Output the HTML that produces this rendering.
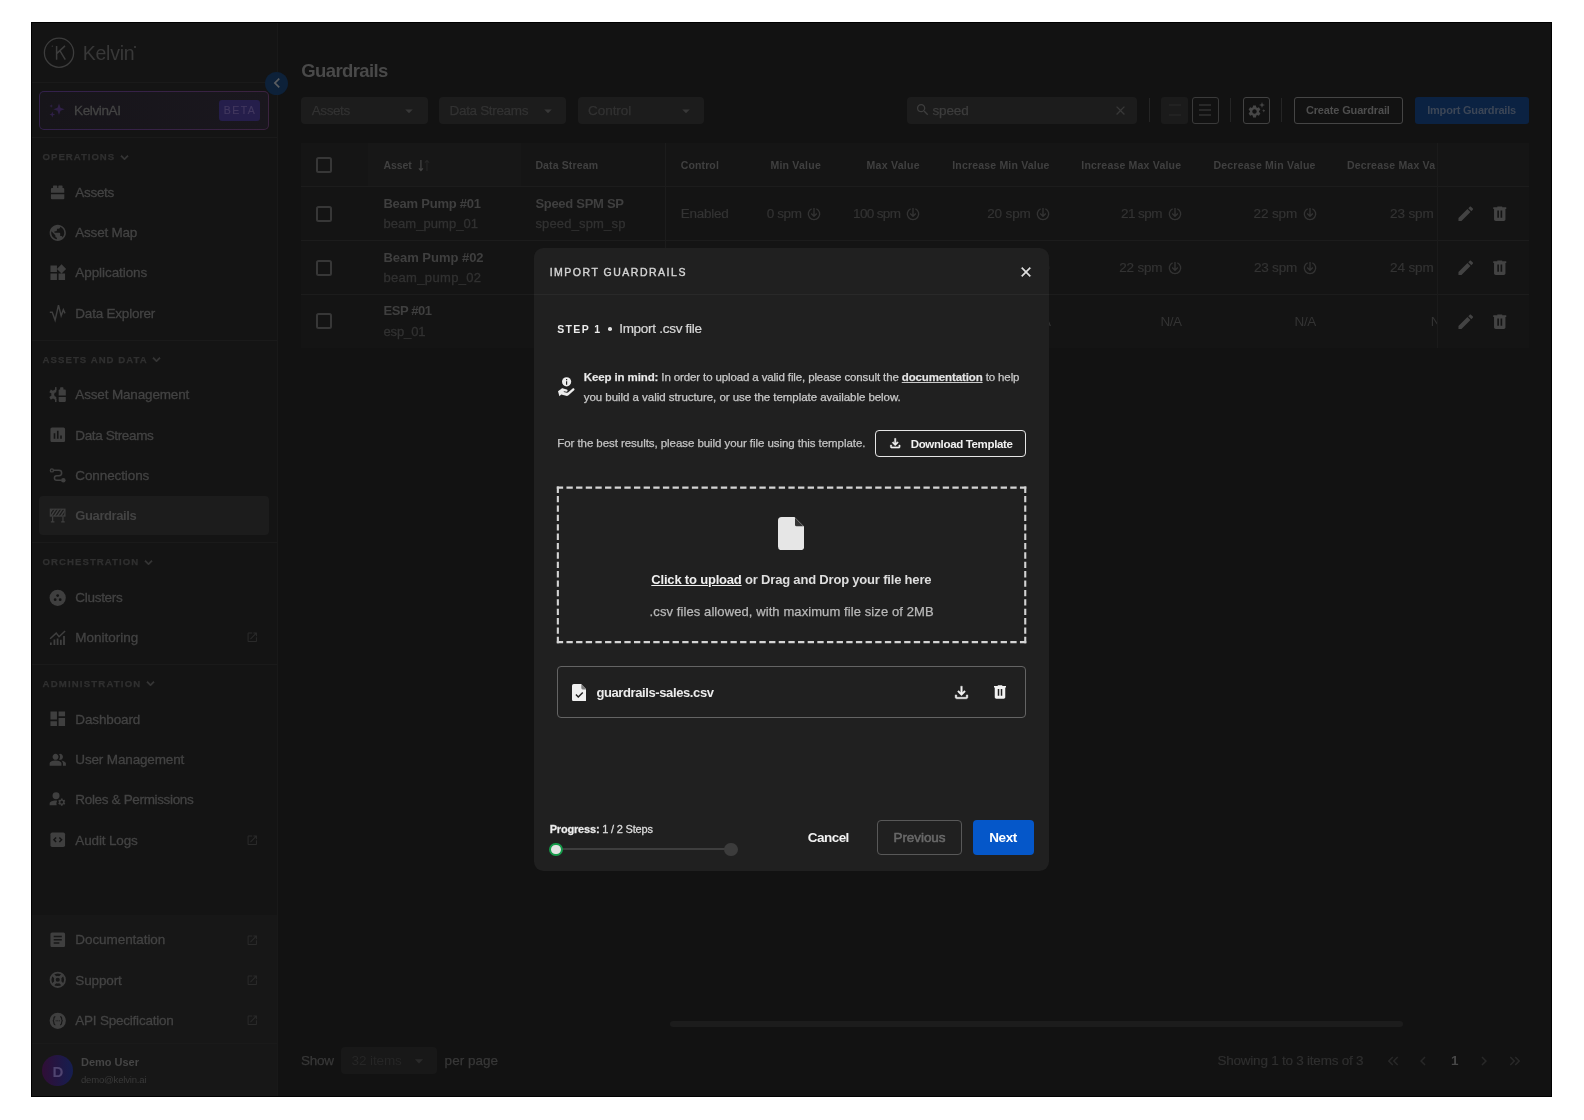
<!DOCTYPE html>
<html lang="en"><head><meta charset="utf-8"><title>Guardrails</title><style>
html,body{margin:0;padding:0;background:#fff;}
body{width:1584px;height:1120px;position:relative;overflow:hidden;font-family:"Liberation Sans",sans-serif;}
div,svg,span.t{position:absolute;}
span.t{white-space:nowrap;}
#root{left:0;top:0;width:1584px;height:1120px;will-change:transform;}
b{font-weight:700;}
</style></head><body>
<div id="root">
<div style="left:31px;top:22px;width:1521px;height:1075px;background:#121212;border:1px solid #000;box-sizing:border-box;"></div>
<div style="left:32px;top:23px;width:246px;height:1073px;background:#141414;border-right:1px solid #191919;box-sizing:border-box;"></div>
<div style="left:32px;top:915px;width:245px;height:181px;background:#171717;"></div>
<svg style="left:43px;top:37px" width="32" height="32" viewBox="0 0 32 32" fill="none" stroke="#3d3d3d"><circle cx="16" cy="15.7" r="14.6" stroke-width="1.3"/><path d="M13.600 8.900v13.800M22 8.900l-8.400 7.700M17 13.800l5.300 8.900" stroke-width="1.500"/><circle cx="9.300" cy="9.200" r=".650" fill="#3d3d3d" stroke="none"/></svg>
<span class="t" style="top:39.8px;font-size:19.5px;line-height:27px;color:#383838;letter-spacing:-0.224px;left:82.7px;">Kelvin</span>
<div style="left:134.4px;top:46.4px;width:1.7px;height:1.7px;background:#3d3d3d;border-radius:1px;"></div>
<div style="left:32px;top:82px;width:245px;height:1px;background:#1a1a1a;"></div>
<div style="left:32px;top:137px;width:245px;height:1px;background:#1a1a1a;"></div>
<div style="left:32px;top:340px;width:245px;height:1px;background:#1a1a1a;"></div>
<div style="left:32px;top:542px;width:245px;height:1px;background:#1a1a1a;"></div>
<div style="left:32px;top:664px;width:245px;height:1px;background:#1a1a1a;"></div>
<div style="left:32px;top:1043px;width:245px;height:1px;background:#1a1a1a;"></div>
<div style="left:39px;top:91px;width:230px;height:38.5px;border:1px solid transparent;border-radius:5px;box-sizing:border-box;background:linear-gradient(90deg,#17151a,#1a171e) padding-box,linear-gradient(90deg,#33214c,#3b2340) border-box;"></div>
<svg style="left:47px;top:100px" width="20" height="20" viewBox="0 0 20 20" fill="#2f2047"><path d="M12 3.5l1.5 4.2 4.2 1.5-4.2 1.5L12 14.9l-1.5-4.2-4.2-1.5 4.2-1.5zM5.3 11.6l.8 2.1 2.1.8-2.1.8-.8 2.1-.8-2.1-2.1-.8 2.1-.8zM4.2 4.2l.5 1.3 1.3.5-1.3.5-.5 1.3-.5-1.3-1.3-.5 1.3-.5z"/></svg>
<span class="t" style="top:101px;font-size:13.5px;line-height:19px;color:#444444;-webkit-text-stroke:0.3px #444444;letter-spacing:-0.362px;left:74px;">KelvinAI</span>
<div style="left:219px;top:100px;width:40.5px;height:20.5px;background:#251e4b;border-radius:3px;"></div>
<span class="t" style="top:103.2px;font-size:10.5px;line-height:15px;color:#42385f;-webkit-text-stroke:0.2px #42385f;letter-spacing:1.452px;left:223.8px;">BETA</span>
<div style="left:265.1px;top:71.7px;width:23.4px;height:23.4px;background:#0d2139;border-radius:50%;"></div>
<svg style="left:267px;top:73.3px" width="20" height="20" viewBox="0 0 24 24" fill="#5a5d60"><path d="M15.41 7.41L14 6l-6 6 6 6 1.41-1.41L10.83 12z"/></svg>
<span class="t" style="top:150.2px;font-size:9.6px;line-height:13px;color:#303030;font-weight:700;-webkit-text-stroke:0.25px #303030;letter-spacing:0.985px;left:42.6px;">OPERATIONS</span>
<svg style="left:116.6px;top:150px" width="15" height="15" viewBox="0 0 24 24" fill="#383838" stroke="#383838" stroke-width=".9"><path d="M16.59 8.59L12 13.17 7.41 8.59 6 10l6 6 6-6z"/></svg>
<span class="t" style="top:352.5px;font-size:9.6px;line-height:13px;color:#303030;font-weight:700;-webkit-text-stroke:0.25px #303030;letter-spacing:1.052px;left:42.6px;">ASSETS AND DATA</span>
<svg style="left:149.1px;top:352.3px" width="15" height="15" viewBox="0 0 24 24" fill="#383838" stroke="#383838" stroke-width=".9"><path d="M16.59 8.59L12 13.17 7.41 8.59 6 10l6 6 6-6z"/></svg>
<span class="t" style="top:554.9px;font-size:9.6px;line-height:13px;color:#303030;font-weight:700;-webkit-text-stroke:0.25px #303030;letter-spacing:1.053px;left:42.6px;">ORCHESTRATION</span>
<svg style="left:140.6px;top:554.7px" width="15" height="15" viewBox="0 0 24 24" fill="#383838" stroke="#383838" stroke-width=".9"><path d="M16.59 8.59L12 13.17 7.41 8.59 6 10l6 6 6-6z"/></svg>
<span class="t" style="top:676.6px;font-size:9.6px;line-height:13px;color:#303030;font-weight:700;-webkit-text-stroke:0.25px #303030;letter-spacing:1.167px;left:42.6px;">ADMINISTRATION</span>
<svg style="left:142.6px;top:676.4px" width="15" height="15" viewBox="0 0 24 24" fill="#383838" stroke="#383838" stroke-width=".9"><path d="M16.59 8.59L12 13.17 7.41 8.59 6 10l6 6 6-6z"/></svg>
<span class="t" style="top:182.8px;font-size:13.5px;line-height:19px;color:#434343;-webkit-text-stroke:0.3px #434343;letter-spacing:-0.304px;left:75.3px;">Assets</span>
<svg style="left:48.250px;top:182.55px" width="19.500" height="19.500" viewBox="0 0 24 24" fill="#3f3f3f"><path d="M3.600 13.800h16.500v5a1.200 1.200 0 0 1-1.200 1.200H4.800a1.200 1.200 0 0 1-1.200-1.200zM3.600 12V7.300a1.200 1.200 0 0 1 1.200-1.200h1.400V3.800a.8.800 0 0 1 .8-.8h3.600a.8.800 0 0 1 .8.800v2.300h1.300V3.800a.8.800 0 0 1 .8-.8h3.600a.8.800 0 0 1 .8.800v2.300h.9a1.200 1.200 0 0 1 1.200 1.200V12z"/></svg>
<span class="t" style="top:223px;font-size:13.5px;line-height:19px;color:#434343;-webkit-text-stroke:0.3px #434343;letter-spacing:-0.224px;left:75.3px;">Asset Map</span>
<svg style="left:48.25px;top:222.75px" width="19.5" height="19.5" viewBox="0 0 24 24" fill="#3f3f3f"><path d="M12 2C6.48 2 2 6.48 2 12s4.48 10 10 10 10-4.48 10-10S17.52 2 12 2zm-1 17.93c-3.95-.49-7-3.85-7-7.93 0-.62.08-1.21.21-1.79L9 15v1c0 1.1.9 2 2 2v1.93zm6.9-2.54c-.26-.81-1-1.39-1.9-1.39h-1v-3c0-.55-.45-1-1-1H8v-2h2c.55 0 1-.45 1-1V7h2c1.1 0 2-.9 2-2v-.41c2.93 1.19 5 4.06 5 7.41 0 2.08-.8 3.97-2.1 5.39z"/></svg>
<span class="t" style="top:263.2px;font-size:13.5px;line-height:19px;color:#434343;-webkit-text-stroke:0.3px #434343;letter-spacing:-0.073px;left:75.3px;">Applications</span>
<svg style="left:48.25px;top:262.95px" width="19.5" height="19.5" viewBox="0 0 24 24" fill="#3f3f3f"><path d="M13 13v8h8v-8h-8zM3 21h8v-8H3v8zM3 3v8h8V3H3zm13.66-1.31L11 7.34 16.66 13l5.66-5.66-5.66-5.65z"/></svg>
<span class="t" style="top:303.5px;font-size:13.5px;line-height:19px;color:#434343;-webkit-text-stroke:0.3px #434343;letter-spacing:-0.211px;left:75.3px;">Data Explorer</span>
<svg style="left:48.250px;top:303.25px" width="19.500" height="19.500" viewBox="0 0 24 24" fill="#3f3f3f"><path d="M2.200 11.400H5.200L8.750 21 12.900 2.600 16.200 15.800 18.900 8.300 21 12.700" fill="none" stroke="#3f3f3f" stroke-width="1.800" stroke-linejoin="miter"/></svg>
<span class="t" style="top:385.1px;font-size:13.5px;line-height:19px;color:#434343;-webkit-text-stroke:0.3px #434343;letter-spacing:-0.155px;left:75.3px;">Asset Management</span>
<svg style="left:48.250px;top:384.85px" width="19.500" height="19.500" viewBox="0 0 24 24" fill="#3f3f3f"><defs><clipPath id="hg"><rect x="0" y="0" width="10.500" height="24"/></clipPath></defs><g clip-path="url(#hg)"><path d="M10.500 5.300A6.500 6.500 0 0 0 10.500 18.300V14.800A3 3 0 0 1 10.500 8.800z"/><rect x="-1.900" y="-9.200" width="3.800" height="4" transform="translate(10.500 11.800) rotate(0)"/><rect x="-1.900" y="-9.200" width="3.800" height="4" transform="translate(10.500 11.800) rotate(-60)"/><rect x="-1.900" y="-9.200" width="3.800" height="4" transform="translate(10.500 11.800) rotate(-120)"/><rect x="-1.900" y="-9.200" width="3.800" height="4" transform="translate(10.500 11.800) rotate(180)"/></g><path d="M13.100 12.900V6.500a1 1 0 0 1 1-1h.8V3.600a.8.800 0 0 1 .8-.8h2.500a.8.800 0 0 1 .8.800V5.500h1.900a1 1 0 0 1 1 1v6.400zM13.100 14.700h8.800v5.100a1 1 0 0 1-1 1h-6.800a1 1 0 0 1-1-1z"/></svg>
<span class="t" style="top:425.5px;font-size:13.5px;line-height:19px;color:#434343;-webkit-text-stroke:0.3px #434343;letter-spacing:-0.368px;left:75.3px;">Data Streams</span>
<svg style="left:48.25px;top:425.25px" width="19.5" height="19.5" viewBox="0 0 24 24" fill="#3f3f3f"><path d="M19 3H5c-1.1 0-2 .9-2 2v14c0 1.1.9 2 2 2h14c1.1 0 2-.9 2-2V5c0-1.1-.9-2-2-2zM9 17H7v-7h2v7zm4 0h-2V7h2v10zm4 0h-2v-4h2v4z"/></svg>
<span class="t" style="top:466px;font-size:13.5px;line-height:19px;color:#434343;-webkit-text-stroke:0.3px #434343;letter-spacing:-0.106px;left:75.3px;">Connections</span>
<svg style="left:48.250px;top:465.75px" width="19.500" height="19.500" viewBox="0 0 24 24" fill="#3f3f3f"><circle cx="4.800" cy="5.400" r="1.900" fill="none" stroke="#3f3f3f" stroke-width="1.700"/><circle cx="18.850" cy="17.500" r="2.800"/><path d="M6.800 5.300h6.700a3.300 3.300 0 0 1 0 6.600h-2.800a2.800 2.800 0 0 0 0 5.600H16.500" fill="none" stroke="#3f3f3f" stroke-width="1.900"/></svg>
<div style="left:39px;top:496px;width:230px;height:38.5px;background:#1c1c1c;border-radius:4px;"></div>
<span class="t" style="top:506.5px;font-size:13px;line-height:18px;color:#434343;font-weight:700;letter-spacing:-0.392px;left:75.3px;">Guardrails</span>
<svg style="left:48.250px;top:505.75px" width="19.500" height="19.500" viewBox="0 0 24 24" fill="#3f3f3f"><defs><clipPath id="gb"><rect x="2.800" y="3.900" width="18" height="8.500"/></clipPath></defs><rect x="2.850" y="3.900" width="18" height="8.500" fill="none" stroke="#3f3f3f" stroke-width="1.400"/><g clip-path="url(#gb)" stroke="#3f3f3f" stroke-width="1.700"><path d="M-1 13.500l7-10.500M3 13.500l7-10.500M7 13.500l7-10.500M11 13.500l7-10.500M15 13.500l7-10.500M19 13.500l7-10.500"/></g><path d="M5.700 13v6.600M18.400 13v6.600M3.500 19.600h4.400M16.200 19.600h4.400" stroke="#3f3f3f" stroke-width="1.500" fill="none"/></svg>
<span class="t" style="top:587.8px;font-size:13.5px;line-height:19px;color:#434343;-webkit-text-stroke:0.3px #434343;letter-spacing:-0.289px;left:75.3px;">Clusters</span>
<svg style="left:48.250px;top:587.55px" width="19.500" height="19.500" viewBox="0 0 24 24" fill="#3f3f3f"><circle cx="11.900" cy="12" r="10"/><circle cx="11.900" cy="9.300" r="1.700" fill="#141414"/><circle cx="8.800" cy="14.400" r="1.700" fill="#141414"/><circle cx="15" cy="14.400" r="1.700" fill="#141414"/></svg>
<span class="t" style="top:628px;font-size:13.5px;line-height:19px;color:#434343;-webkit-text-stroke:0.3px #434343;letter-spacing:-0.004px;left:75.3px;">Monitoring</span>
<svg style="left:48.250px;top:627.75px" width="19.500" height="19.500" viewBox="0 0 24 24" fill="#3f3f3f"><path d="M2.400 20.800v-3.100h2.200v3.100zM6.800 20.800v-6.600H9v6.600zM10.700 20.800v-7.900h2.200v7.900zM14.700 20.800v-6.200h2.200v6.200zM18.600 20.800V9.800h2.200v11z"/><path d="M2.600 13.300l7.500-7 3.500 4.400 7.450-7.050" fill="none" stroke="#3f3f3f" stroke-width="1.800"/></svg>
<svg style="left:245.75px;top:631.25px" width="12.5" height="12.5" viewBox="0 0 24 24" fill="#2a2a2a"><path d="M19 19H5V5h7V3H5c-1.11 0-2 .9-2 2v14c0 1.1.89 2 2 2h14c1.1 0 2-.9 2-2v-7h-2v7zM14 3v2h3.59l-9.83 9.83 1.41 1.41L19 6.41V10h2V3h-7z"/></svg>
<span class="t" style="top:709.5px;font-size:13.5px;line-height:19px;color:#434343;-webkit-text-stroke:0.3px #434343;letter-spacing:-0.132px;left:75.3px;">Dashboard</span>
<svg style="left:48.25px;top:709.25px" width="19.5" height="19.5" viewBox="0 0 24 24" fill="#3f3f3f"><path d="M3 13h8V3H3v10zm0 8h8v-6H3v6zm10 0h8V11h-8v10zm0-18v6h8V3h-8z"/></svg>
<span class="t" style="top:749.8px;font-size:13.5px;line-height:19px;color:#434343;-webkit-text-stroke:0.3px #434343;letter-spacing:-0.147px;left:75.3px;">User Management</span>
<svg style="left:48.250px;top:749.55px" width="19.500" height="19.500" viewBox="0 0 24 24" fill="#3f3f3f"><g transform="translate(1.100 1.100) scale(.91)"><path d="M1 20v-2.800q0-.85.438-1.563T2.600 14.550q1.550-.775 3.150-1.163T9 13q1.650 0 3.250.388t3.150 1.162q.725.375 1.163 1.088T17 17.200V20zm18 0v-3q0-1.100-.612-2.113T16.650 13.150q1.275.15 2.400.513t2.100.887q.9.5 1.375 1.112T23 17v3zM9 12q-1.650 0-2.825-1.175T5 8q0-1.650 1.175-2.825T9 4q1.650 0 2.825 1.175T13 8q0 1.650-1.175 2.825T9 12zm10-4q0 1.650-1.175 2.825T15 12q-.275 0-.7-.063t-.7-.137q.675-.8 1.037-1.775T15 8q0-1.050-.363-2.025T13.600 4.200q.35-.125.7-.163T15 4q1.650 0 2.825 1.175T19 8z"/></g></svg>
<span class="t" style="top:790.2px;font-size:13.5px;line-height:19px;color:#434343;-webkit-text-stroke:0.3px #434343;letter-spacing:-0.336px;left:75.3px;">Roles &amp; Permissions</span>
<svg style="left:48.250px;top:789.95px" width="19.500" height="19.500" viewBox="0 0 24 24" fill="#3f3f3f"><circle cx="9.900" cy="7.100" r="4.300"/><path d="M2 18.900v-2.300c0-2.400 4-3.600 7.500-3.600.6 0 1.200 0 1.800.1a6.500 6.500 0 0 0-.6 5.800z"/><g transform="translate(11.400 9.450) scale(.46)"><path d="M19.14 12.94c.04-.3.06-.61.06-.94 0-.32-.02-.64-.07-.94l2.03-1.58c.18-.14.23-.41.12-.61l-1.92-3.32c-.12-.22-.37-.29-.59-.22l-2.39.96c-.5-.38-1.03-.7-1.62-.94l-.36-2.54c-.04-.24-.24-.41-.48-.41h-3.84c-.24 0-.43.17-.47.41l-.36 2.54c-.59.24-1.13.57-1.62.94l-2.39-.96c-.22-.08-.47 0-.59.22L2.74 8.87c-.12.21-.08.47.12.61l2.03 1.58c-.05.3-.09.63-.09.94s.02.64.07.94l-2.03 1.58c-.18.14-.23.41-.12.61l1.92 3.32c.12.22.37.29.59.22l2.39-.96c.5.38 1.03.7 1.62.94l.36 2.54c.05.24.24.41.48.41h3.84c.24 0 .44-.17.47-.41l.36-2.54c.59-.24 1.13-.56 1.62-.94l2.39.96c.22.08.47 0 .59-.22l1.92-3.32c.12-.22.07-.47-.12-.61l-2.01-1.58zM12 15.6c-1.98 0-3.6-1.62-3.6-3.6s1.62-3.6 3.6-3.6 3.6 1.62 3.6 3.6-1.62 3.6-3.6 3.6z"/></g></svg>
<span class="t" style="top:830.5px;font-size:13.5px;line-height:19px;color:#434343;-webkit-text-stroke:0.3px #434343;letter-spacing:-0.144px;left:75.3px;">Audit Logs</span>
<svg style="left:48.250px;top:830.25px" width="19.500" height="19.500" viewBox="0 0 24 24" fill="#3f3f3f"><rect x="3" y="3" width="18" height="18" rx="2.200"/><path d="M10 9.300L7.300 12l2.700 2.700M14 9.300l2.700 2.700-2.700 2.700" fill="none" stroke="#141414" stroke-width="1.800"/></svg>
<svg style="left:245.75px;top:833.75px" width="12.5" height="12.5" viewBox="0 0 24 24" fill="#2a2a2a"><path d="M19 19H5V5h7V3H5c-1.11 0-2 .9-2 2v14c0 1.1.89 2 2 2h14c1.1 0 2-.9 2-2v-7h-2v7zM14 3v2h3.59l-9.83 9.83 1.41 1.41L19 6.41V10h2V3h-7z"/></svg>
<span class="t" style="top:930.3px;font-size:13.5px;line-height:19px;color:#434343;-webkit-text-stroke:0.3px #434343;letter-spacing:-0.067px;left:75.3px;">Documentation</span>
<svg style="left:48.25px;top:930.05px" width="19.5" height="19.5" viewBox="0 0 24 24" fill="#3f3f3f"><path d="M19 3H5c-1.1 0-2 .9-2 2v14c0 1.1.9 2 2 2h14c1.1 0 2-.9 2-2V5c0-1.1-.9-2-2-2zm-5 14H7v-2h7v2zm3-4H7v-2h10v2zm0-4H7V7h10v2z"/></svg>
<svg style="left:245.75px;top:933.55px" width="12.5" height="12.5" viewBox="0 0 24 24" fill="#2a2a2a"><path d="M19 19H5V5h7V3H5c-1.11 0-2 .9-2 2v14c0 1.1.89 2 2 2h14c1.1 0 2-.9 2-2v-7h-2v7zM14 3v2h3.59l-9.83 9.83 1.41 1.41L19 6.41V10h2V3h-7z"/></svg>
<span class="t" style="top:970.5px;font-size:13.5px;line-height:19px;color:#434343;-webkit-text-stroke:0.3px #434343;letter-spacing:-0.132px;left:75.3px;">Support</span>
<svg style="left:48.250px;top:970.25px" width="19.500" height="19.500" viewBox="0 0 24 24" fill="#3f3f3f"><circle cx="12" cy="12" r="8.900" fill="none" stroke="#3f3f3f" stroke-width="2.200"/><circle cx="12" cy="12" r="3.600" fill="none" stroke="#3f3f3f" stroke-width="2"/><path d="M5.500 5.500l4 4M18.500 5.500l-4 4M5.500 18.500l4-4M18.500 18.500l-4-4" stroke="#3f3f3f" stroke-width="3.500"/></svg>
<svg style="left:245.75px;top:973.75px" width="12.5" height="12.5" viewBox="0 0 24 24" fill="#2a2a2a"><path d="M19 19H5V5h7V3H5c-1.11 0-2 .9-2 2v14c0 1.1.89 2 2 2h14c1.1 0 2-.9 2-2v-7h-2v7zM14 3v2h3.59l-9.83 9.83 1.41 1.41L19 6.41V10h2V3h-7z"/></svg>
<span class="t" style="top:1010.8px;font-size:13.5px;line-height:19px;color:#434343;-webkit-text-stroke:0.3px #434343;letter-spacing:-0.222px;left:75.3px;">API Specification</span>
<svg style="left:48.250px;top:1010.55px" width="19.500" height="19.500" viewBox="0 0 24 24" fill="#3f3f3f"><circle cx="12" cy="12" r="10"/><path d="M9 7c-1.800 0-1.800 1.300-1.800 2.700S6.800 12 5.800 12c1 0 1.400 1 1.400 2.300s0 2.700 1.800 2.700M15 7c1.800 0 1.800 1.300 1.800 2.700s.4 2.300 1.400 2.300c-1 0-1.400 1-1.400 2.300s0 2.700-1.800 2.700" fill="none" stroke="#171717" stroke-width="1.400"/><circle cx="10" cy="12" r=".7" fill="#171717"/><circle cx="12" cy="12" r=".7" fill="#171717"/><circle cx="14" cy="12" r=".7" fill="#171717"/></svg>
<svg style="left:245.75px;top:1014.05px" width="12.5" height="12.5" viewBox="0 0 24 24" fill="#2a2a2a"><path d="M19 19H5V5h7V3H5c-1.11 0-2 .9-2 2v14c0 1.1.89 2 2 2h14c1.1 0 2-.9 2-2v-7h-2v7zM14 3v2h3.59l-9.83 9.83 1.41 1.41L19 6.41V10h2V3h-7z"/></svg>
<div style="left:42.2px;top:1055.3px;width:31px;height:31px;border-radius:50%;background:linear-gradient(90deg,#300e36,#151e50);"></div>
<span class="t" style="top:1060.5px;font-size:15px;line-height:21px;color:#4f4470;font-weight:700;left:52.45px;">D</span>
<span class="t" style="top:1055px;font-size:11px;line-height:15px;color:#454545;font-weight:700;letter-spacing:-0.010px;left:81px;">Demo User</span>
<span class="t" style="top:1072.8px;font-size:9.5px;line-height:13px;color:#3a3a3a;letter-spacing:-0.172px;left:81px;">demo@kelvin.ai</span>
<span class="t" style="top:58.3px;font-size:18.5px;line-height:26px;color:#494949;font-weight:700;letter-spacing:-0.616px;left:301.3px;">Guardrails</span>
<div style="left:301px;top:97px;width:126.5px;height:26.5px;background:#1c1c1c;border-radius:4px;"></div>
<span class="t" style="top:100.8px;font-size:13.5px;line-height:19px;color:#323232;-webkit-text-stroke:0.25px #323232;letter-spacing:-0.405px;left:311.7px;">Assets</span>
<svg style="left:400.3px;top:101.6px" width="18" height="18" viewBox="0 0 24 24" fill="#383838"><path d="M7 10l5 5 5-5z"/></svg>
<div style="left:439px;top:97px;width:126.5px;height:26.5px;background:#1c1c1c;border-radius:4px;"></div>
<span class="t" style="top:100.8px;font-size:13.5px;line-height:19px;color:#323232;-webkit-text-stroke:0.25px #323232;letter-spacing:-0.339px;left:449.6px;">Data Streams</span>
<svg style="left:538.5px;top:101.6px" width="18" height="18" viewBox="0 0 24 24" fill="#383838"><path d="M7 10l5 5 5-5z"/></svg>
<div style="left:577.5px;top:97px;width:126.5px;height:26.5px;background:#1c1c1c;border-radius:4px;"></div>
<span class="t" style="top:100.8px;font-size:13.5px;line-height:19px;color:#323232;-webkit-text-stroke:0.25px #323232;letter-spacing:-0.037px;left:588px;">Control</span>
<svg style="left:676.8px;top:101.6px" width="18" height="18" viewBox="0 0 24 24" fill="#383838"><path d="M7 10l5 5 5-5z"/></svg>
<div style="left:906.5px;top:97px;width:230px;height:26.5px;background:#1c1c1c;border-radius:4px;"></div>
<svg style="left:914.75px;top:102.45px" width="15.5" height="15.5" viewBox="0 0 24 24" fill="#3d3d3d"><path d="M15.5 14h-.79l-.28-.27C15.41 12.59 16 11.11 16 9.5 16 5.91 13.09 3 9.5 3S3 5.91 3 9.5 5.91 16 9.5 16c1.61 0 3.09-.59 4.23-1.57l.27.28v.79l5 4.99L20.49 19l-4.99-5zm-6 0C7.01 14 5 11.99 5 9.5S7.01 5 9.5 5 14 7.01 14 9.5 11.99 14 9.5 14z"/></svg>
<span class="t" style="top:100.5px;font-size:13.5px;line-height:19px;color:#3d3d3d;-webkit-text-stroke:0.25px #3d3d3d;letter-spacing:-0.124px;left:932.4px;">speed</span>
<svg style="left:1113.1px;top:102.8px" width="15" height="15" viewBox="0 0 24 24" fill="#383838"><path d="M19 6.41L17.59 5 12 10.59 6.41 5 5 6.41 10.59 12 5 17.59 6.41 19 12 13.41 17.59 19 19 17.59 13.41 12z"/></svg>
<div style="left:1148.5px;top:98px;width:1px;height:24px;background:#252525;"></div>
<div style="left:1230.2px;top:98px;width:1px;height:24px;background:#252525;"></div>
<div style="left:1281.2px;top:98px;width:1px;height:24px;background:#252525;"></div>
<div style="left:1161px;top:97px;width:26.6px;height:26.5px;background:#1b1b1b;border-radius:3px;"></div>
<svg style="left:1167.6px;top:103.2px" width="14" height="14" viewBox="0 0 14 14" stroke="#2b2b2b" stroke-width="1.2"><path d="M1 2h12M1 12h12"/></svg>
<div style="left:1192.3px;top:97px;width:26.3px;height:26.5px;border:1px solid #3a3a3a;border-radius:3px;box-sizing:border-box;"></div>
<svg style="left:1198.4px;top:103.2px" width="14" height="14" viewBox="0 0 14 14" stroke="#404040" stroke-width="1.2"><path d="M1 2h12M1 7h12M1 12h12"/></svg>
<div style="left:1242.8px;top:97px;width:26.8px;height:26.5px;border:1px solid #424242;border-radius:3px;box-sizing:border-box;"></div>
<svg style="left:1246.7px;top:103.7px" width="15" height="15" viewBox="0 0 24 24" fill="#464646"><path d="M19.14 12.94c.04-.3.06-.61.06-.94 0-.32-.02-.64-.07-.94l2.03-1.58c.18-.14.23-.41.12-.61l-1.92-3.32c-.12-.22-.37-.29-.59-.22l-2.39.96c-.5-.38-1.03-.7-1.62-.94l-.36-2.54c-.04-.24-.24-.41-.48-.41h-3.84c-.24 0-.43.17-.47.41l-.36 2.54c-.59.24-1.13.57-1.62.94l-2.39-.96c-.22-.08-.47 0-.59.22L2.74 8.87c-.12.21-.08.47.12.61l2.03 1.58c-.05.3-.09.63-.09.94s.02.64.07.94l-2.03 1.58c-.18.14-.23.41-.12.61l1.92 3.32c.12.22.37.29.59.22l2.39-.96c.5.38 1.03.7 1.62.94l.36 2.54c.05.24.24.41.48.41h3.84c.24 0 .44-.17.47-.41l.36-2.54c.59-.24 1.13-.56 1.62-.94l2.39.96c.22.08.47 0 .59-.22l1.92-3.32c.12-.22.07-.47-.12-.61l-2.01-1.58zM12 15.6c-1.98 0-3.6-1.62-3.6-3.6s1.62-3.6 3.6-3.6 3.6 1.62 3.6 3.6-1.62 3.6-3.6 3.6z"/></svg>
<svg style="left:1258.700px;top:101.700px" width="6" height="6" viewBox="0 0 8 8" fill="#464646"><path d="M4 0l1 3 3 1-3 1-1 3-1-3-3-1 3-1z"/></svg><svg style="left:1261.800px;top:109.300px" width="3.600" height="3.600" viewBox="0 0 8 8" fill="#464646"><path d="M4 0l1 3 3 1-3 1-1 3-1-3-3-1 3-1z"/></svg>
<div style="left:1293.8px;top:97px;width:109.2px;height:26.5px;border:1px solid #454545;border-radius:3px;box-sizing:border-box;"></div>
<span class="t" style="top:102.8px;font-size:11px;line-height:15px;color:#4e4e4e;font-weight:700;letter-spacing:-0.147px;left:1305.9px;">Create Guardrail</span>
<div style="left:1414.7px;top:97px;width:114px;height:26.5px;background:#0b2242;border-radius:3px;"></div>
<span class="t" style="top:102.8px;font-size:11px;line-height:15px;color:#3c4656;font-weight:700;letter-spacing:-0.206px;left:1427.2px;">Import Guardrails</span>
<div style="left:300.6px;top:143px;width:1228.1px;height:205.2px;background:#141414;"></div>
<div style="left:300.6px;top:143px;width:1228.1px;height:43.3px;background:#151515;"></div>
<div style="left:367.5px;top:143px;width:153px;height:43.3px;background:#171717;"></div>
<div style="left:300.6px;top:185.8px;width:1228.1px;height:1px;background:#1c1c1c;"></div>
<div style="left:300.6px;top:239.7px;width:1228.1px;height:1px;background:#1c1c1c;"></div>
<div style="left:300.6px;top:293.5px;width:1228.1px;height:1px;background:#1c1c1c;"></div>
<div style="left:665px;top:143px;width:1px;height:205.2px;background:#1c1c1c;"></div>
<div style="left:1436.7px;top:143px;width:1px;height:205.2px;background:#1b1b1b;"></div>
<div style="left:316px;top:157px;width:16px;height:16px;border:2px solid #373737;border-radius:2.5px;box-sizing:border-box;"></div>
<div style="left:316px;top:206px;width:16px;height:16px;border:2px solid #373737;border-radius:2.5px;box-sizing:border-box;"></div>
<div style="left:316px;top:259.6px;width:16px;height:16px;border:2px solid #373737;border-radius:2.5px;box-sizing:border-box;"></div>
<div style="left:316px;top:313.4px;width:16px;height:16px;border:2px solid #373737;border-radius:2.5px;box-sizing:border-box;"></div>
<span class="t" style="top:157.5px;font-size:10.5px;line-height:15px;color:#404040;font-weight:700;letter-spacing:-0.077px;left:383.4px;">Asset</span>
<svg style="left:416px;top:158.500px" width="16" height="13" viewBox="0 0 16 13" fill="none"><path d="M4.900 1v10.500M2.900 9.400l2 2.100 2-2.100" stroke="#424242" stroke-width="1.300"/><path d="M11 12V1.500M8.800 3.700L11 1.500l2.200 2.200" stroke="#262626" stroke-width="1.100"/></svg>
<span class="t" style="top:157.5px;font-size:10.5px;line-height:15px;color:#404040;font-weight:700;letter-spacing:0.132px;left:535.4px;">Data Stream</span>
<span class="t" style="top:157.5px;font-size:10.5px;line-height:15px;color:#404040;font-weight:700;letter-spacing:0.112px;left:680.8px;">Control</span>
<span class="t" style="top:157.5px;font-size:10.5px;line-height:15px;color:#404040;font-weight:700;letter-spacing:0.245px;left:770.4px;">Min Value</span>
<span class="t" style="top:157.5px;font-size:10.5px;line-height:15px;color:#404040;font-weight:700;letter-spacing:0.277px;left:866.6px;">Max Value</span>
<span class="t" style="top:157.5px;font-size:10.5px;line-height:15px;color:#404040;font-weight:700;letter-spacing:0.190px;left:952.2px;">Increase Min Value</span>
<span class="t" style="top:157.5px;font-size:10.5px;line-height:15px;color:#404040;font-weight:700;letter-spacing:0.199px;left:1081.3px;">Increase Max Value</span>
<span class="t" style="top:157.5px;font-size:10.5px;line-height:15px;color:#404040;font-weight:700;letter-spacing:0.232px;left:1213.4px;">Decrease Min Value</span>
<div style="left:1340px;top:150px;width:95.600px;height:30px;overflow:hidden">
<span class="t" style="top:7.5px;font-size:10.5px;line-height:15px;color:#404040;font-weight:700;letter-spacing:0.211px;left:6.9px;">Decrease Max Value</span>
</div>
<span class="t" style="top:194.7px;font-size:13px;line-height:18px;color:#3f3f3f;font-weight:700;letter-spacing:-0.228px;left:383.4px;">Beam Pump #01</span>
<span class="t" style="top:215px;font-size:13px;line-height:18px;color:#313131;-webkit-text-stroke:0.3px #313131;letter-spacing:0.067px;left:383.4px;">beam_pump_01</span>
<span class="t" style="top:248.5px;font-size:13px;line-height:18px;color:#3f3f3f;font-weight:700;letter-spacing:-0.020px;left:383.4px;">Beam Pump #02</span>
<span class="t" style="top:268.8px;font-size:13px;line-height:18px;color:#313131;-webkit-text-stroke:0.3px #313131;letter-spacing:0.339px;left:383.4px;">beam_pump_02</span>
<span class="t" style="top:302.2px;font-size:13px;line-height:18px;color:#3f3f3f;font-weight:700;letter-spacing:-0.399px;left:383.4px;">ESP #01</span>
<span class="t" style="top:322.5px;font-size:13px;line-height:18px;color:#313131;-webkit-text-stroke:0.3px #313131;letter-spacing:-0.091px;left:383.4px;">esp_01</span>
<span class="t" style="top:194.7px;font-size:13px;line-height:18px;color:#3f3f3f;font-weight:700;letter-spacing:-0.287px;left:535.4px;">Speed SPM SP</span>
<span class="t" style="top:215px;font-size:13px;line-height:18px;color:#313131;-webkit-text-stroke:0.3px #313131;letter-spacing:0.166px;left:535.4px;">speed_spm_sp</span>
<span class="t" style="top:204px;font-size:13.5px;line-height:19px;color:#333;-webkit-text-stroke:0.2px #333;letter-spacing:-0.258px;left:680.8px;">Enabled</span>
<span class="t" style="top:204px;font-size:13.5px;line-height:19px;color:#333;-webkit-text-stroke:0.2px #333;letter-spacing:-0.369px;left:766.7px;">0 spm</span>
<svg style="left:807.3px;top:206.8px" width="14" height="14" viewBox="0 0 14 14" fill="none" stroke="#333" stroke-width="1.35"><path d="M9.410 1.830A5.700 5.700 0 1 1 4.590 1.830"/><path d="M7 1v8.300M4.200 6.600L7 9.400l2.800-2.800"/></svg>
<span class="t" style="top:204px;font-size:13.5px;line-height:19px;color:#333;-webkit-text-stroke:0.2px #333;letter-spacing:-0.632px;left:853px;">100 spm</span>
<svg style="left:906.3px;top:206.8px" width="14" height="14" viewBox="0 0 14 14" fill="none" stroke="#333" stroke-width="1.35"><path d="M9.410 1.830A5.700 5.700 0 1 1 4.590 1.830"/><path d="M7 1v8.300M4.200 6.600L7 9.400l2.800-2.800"/></svg>
<span class="t" style="top:204px;font-size:13.5px;line-height:19px;color:#333;-webkit-text-stroke:0.2px #333;letter-spacing:-0.136px;left:987.2px;">20 spm</span>
<svg style="left:1036.1px;top:206.8px" width="14" height="14" viewBox="0 0 14 14" fill="none" stroke="#333" stroke-width="1.35"><path d="M9.410 1.830A5.700 5.700 0 1 1 4.590 1.830"/><path d="M7 1v8.300M4.200 6.600L7 9.400l2.800-2.800"/></svg>
<span class="t" style="top:204px;font-size:13.5px;line-height:19px;color:#333;-webkit-text-stroke:0.2px #333;letter-spacing:-0.556px;left:1121px;">21 spm</span>
<svg style="left:1167.8px;top:206.8px" width="14" height="14" viewBox="0 0 14 14" fill="none" stroke="#333" stroke-width="1.35"><path d="M9.410 1.830A5.700 5.700 0 1 1 4.590 1.830"/><path d="M7 1v8.300M4.200 6.600L7 9.400l2.800-2.800"/></svg>
<span class="t" style="top:204px;font-size:13.5px;line-height:19px;color:#333;-webkit-text-stroke:0.2px #333;letter-spacing:-0.136px;left:1253.6px;">22 spm</span>
<svg style="left:1302.5px;top:206.8px" width="14" height="14" viewBox="0 0 14 14" fill="none" stroke="#333" stroke-width="1.35"><path d="M9.410 1.830A5.700 5.700 0 1 1 4.590 1.830"/><path d="M7 1v8.300M4.200 6.600L7 9.400l2.800-2.800"/></svg>
<span class="t" style="top:204px;font-size:13.5px;line-height:19px;color:#333;-webkit-text-stroke:0.2px #333;letter-spacing:-0.136px;left:1390.1px;">23 spm</span>
<span class="t" style="top:257.8px;font-size:13.5px;line-height:19px;color:#333;-webkit-text-stroke:0.2px #333;letter-spacing:-0.556px;left:989.3px;">21 spm</span>
<svg style="left:1036.1px;top:260.6px" width="14" height="14" viewBox="0 0 14 14" fill="none" stroke="#333" stroke-width="1.35"><path d="M9.410 1.830A5.700 5.700 0 1 1 4.590 1.830"/><path d="M7 1v8.300M4.200 6.600L7 9.400l2.800-2.800"/></svg>
<span class="t" style="top:257.8px;font-size:13.5px;line-height:19px;color:#333;-webkit-text-stroke:0.2px #333;letter-spacing:-0.216px;left:1119.3px;">22 spm</span>
<svg style="left:1167.8px;top:260.6px" width="14" height="14" viewBox="0 0 14 14" fill="none" stroke="#333" stroke-width="1.35"><path d="M9.410 1.830A5.700 5.700 0 1 1 4.590 1.830"/><path d="M7 1v8.300M4.200 6.600L7 9.400l2.800-2.800"/></svg>
<span class="t" style="top:257.8px;font-size:13.5px;line-height:19px;color:#333;-webkit-text-stroke:0.2px #333;letter-spacing:-0.216px;left:1254px;">23 spm</span>
<svg style="left:1302.5px;top:260.6px" width="14" height="14" viewBox="0 0 14 14" fill="none" stroke="#333" stroke-width="1.35"><path d="M9.410 1.830A5.700 5.700 0 1 1 4.590 1.830"/><path d="M7 1v8.300M4.200 6.600L7 9.400l2.800-2.800"/></svg>
<span class="t" style="top:257.8px;font-size:13.5px;line-height:19px;color:#333;-webkit-text-stroke:0.2px #333;letter-spacing:-0.136px;left:1390.1px;">24 spm</span>
<span class="t" style="top:312px;font-size:13.5px;line-height:19px;color:#333;letter-spacing:-0.459px;left:1029.4px;">N/A</span>
<span class="t" style="top:312px;font-size:13.5px;line-height:19px;color:#333;letter-spacing:-0.459px;left:1160.4px;">N/A</span>
<span class="t" style="top:312px;font-size:13.5px;line-height:19px;color:#333;letter-spacing:-0.459px;left:1294.6px;">N/A</span>
<div style="left:1425px;top:310px;width:11.700px;height:24px;overflow:hidden">
<span class="t" style="top:2px;font-size:13.5px;line-height:19px;color:#333;letter-spacing:-0.459px;left:5.7px;">N/A</span>
</div>
<svg style="left:1455.85px;top:203.75px" width="19.5" height="19.5" viewBox="0 0 24 24" fill="#434343"><path d="M3 17.25V21h3.75L17.81 9.94l-3.75-3.75L3 17.25zM20.71 7.04c.39-.39.39-1.02 0-1.41l-2.34-2.34c-.39-.39-1.02-.39-1.41 0l-1.83 1.83 3.75 3.75 1.83-1.83z"/></svg>
<svg style="left:1490.25px;top:203.75px" width="19.5" height="19.5" viewBox="0 0 24 24" fill="#434343"><path d="M7 21q-.825 0-1.412-.587T5 19V6H4V4h5V3h6v1h5v2h-1v13q0 .825-.587 1.413T17 21zM9 17h2V8H9zm4 0h2V8h-2z"/></svg>
<svg style="left:1455.85px;top:257.55px" width="19.5" height="19.5" viewBox="0 0 24 24" fill="#434343"><path d="M3 17.25V21h3.75L17.81 9.94l-3.75-3.75L3 17.25zM20.71 7.04c.39-.39.39-1.02 0-1.41l-2.34-2.34c-.39-.39-1.02-.39-1.41 0l-1.83 1.83 3.75 3.75 1.83-1.83z"/></svg>
<svg style="left:1490.25px;top:257.55px" width="19.5" height="19.5" viewBox="0 0 24 24" fill="#434343"><path d="M7 21q-.825 0-1.412-.587T5 19V6H4V4h5V3h6v1h5v2h-1v13q0 .825-.587 1.413T17 21zM9 17h2V8H9zm4 0h2V8h-2z"/></svg>
<svg style="left:1455.85px;top:311.75px" width="19.5" height="19.5" viewBox="0 0 24 24" fill="#434343"><path d="M3 17.25V21h3.75L17.81 9.94l-3.75-3.75L3 17.25zM20.71 7.04c.39-.39.39-1.02 0-1.41l-2.34-2.34c-.39-.39-1.02-.39-1.41 0l-1.83 1.83 3.75 3.75 1.83-1.83z"/></svg>
<svg style="left:1490.25px;top:311.75px" width="19.5" height="19.5" viewBox="0 0 24 24" fill="#434343"><path d="M7 21q-.825 0-1.412-.587T5 19V6H4V4h5V3h6v1h5v2h-1v13q0 .825-.587 1.413T17 21zM9 17h2V8H9zm4 0h2V8h-2z"/></svg>
<div style="left:669.5px;top:1021.3px;width:733.3px;height:6.2px;background:#1c1c1c;border-radius:3px;"></div>
<span class="t" style="top:1050.9px;font-size:13.5px;line-height:19px;color:#383838;-webkit-text-stroke:0.25px #383838;letter-spacing:-0.257px;left:301px;">Show</span>
<div style="left:341.3px;top:1047px;width:95.7px;height:27px;background:#181818;border-radius:4px;"></div>
<span class="t" style="top:1050.9px;font-size:13.5px;line-height:19px;color:#262626;letter-spacing:-0.119px;left:351.6px;">32 items</span>
<svg style="left:408.8px;top:1050.8px" width="20" height="20" viewBox="0 0 24 24" fill="#2a2a2a"><path d="M7 10l5 5 5-5z"/></svg>
<span class="t" style="top:1050.9px;font-size:13.5px;line-height:19px;color:#383838;-webkit-text-stroke:0.25px #383838;letter-spacing:0.029px;left:444.6px;">per page</span>
<span class="t" style="top:1051.1px;font-size:13.5px;line-height:19px;color:#2f2f2f;-webkit-text-stroke:0.2px #2f2f2f;letter-spacing:-0.233px;left:1217.5px;">Showing 1 to 3 items of 3</span>
<svg style="left:1383.8px;top:1051.6px" width="18" height="18" viewBox="0 0 24 24" fill="#282828"><path d="M17.59 18L19 16.59 14.42 12 19 7.41 17.59 6l-6 6zM11 18l1.41-1.41L7.83 12l4.58-4.59L11 6l-6 6z"/></svg>
<svg style="left:1414px;top:1051.6px" width="18" height="18" viewBox="0 0 24 24" fill="#282828"><path d="M15.41 7.41L14 6l-6 6 6 6 1.41-1.41L10.83 12z"/></svg>
<span class="t" style="top:1051.1px;font-size:13.5px;line-height:19px;color:#474747;font-weight:700;left:1450.95px;">1</span>
<svg style="left:1475px;top:1051.6px" width="18" height="18" viewBox="0 0 24 24" fill="#282828"><path d="M8.59 16.59L10 18l6-6-6-6-1.41 1.41L13.17 12z"/></svg>
<svg style="left:1506.4px;top:1051.6px" width="18" height="18" viewBox="0 0 24 24" fill="#282828"><path d="M6.41 6L5 7.41 9.58 12 5 16.59 6.41 18l6-6zM13 6l-1.41 1.41L16.17 12l-4.58 4.59L13 18l6-6z"/></svg>
<div style="left:534.3px;top:247.5px;width:514.5px;height:623.3px;background:#202020;border-radius:9.5px;"></div>
<span class="t" style="top:264.7px;font-size:10.5px;line-height:15px;color:#d4d4d4;-webkit-text-stroke:0.4px #d4d4d4;letter-spacing:1.504px;left:549.7px;">IMPORT GUARDRAILS</span>
<svg style="left:1017.7px;top:263.9px" width="16" height="16" viewBox="0 0 24 24" fill="#dedede" stroke="#dedede" stroke-width=".7"><path d="M19 6.41L17.59 5 12 10.59 6.41 5 5 6.41 10.59 12 5 17.59 6.41 19 12 13.41 17.59 19 19 17.59 13.41 12z"/></svg>
<div style="left:534.3px;top:294px;width:514.5px;height:1px;background:#292929;"></div>
<span class="t" style="top:321.5px;font-size:10.5px;line-height:15px;color:#ebebeb;font-weight:700;letter-spacing:1.360px;left:557.2px;">STEP 1</span>
<div style="left:608.2px;top:327.3px;width:3.6px;height:3.6px;background:#e0e0e0;border-radius:50%;"></div>
<span class="t" style="top:319px;font-size:13.5px;line-height:19px;color:#d8d8d8;-webkit-text-stroke:0.2px #d8d8d8;letter-spacing:-0.282px;left:619.2px;">Import .csv file</span>
<svg style="left:557px;top:376px" width="19" height="21" viewBox="0 0 19 21" fill="#ededed"><circle cx="9.600" cy="5.800" r="4.600"/><path d="M9 3h1.200v1.200H9zM9 5.200h1.200v3.600H9z" fill="#202020"/><path d="M1 15.300l3.400-2.600c.5-.4 1.200-.5 1.800-.3l3.600 1.200c.6.200.9.800.7 1.400-.2.500-.7.800-1.300.7l-2.300-.5-.2.700 3.200.8c.5.100 1-.1 1.400-.4l4.300-3.700c.5-.4 1.200-.4 1.600.1.400.4.400 1.100-.1 1.500l-5.600 5c-.7.600-1.600.8-2.500.6l-4.800-1.200-1.800 1.700z"/></svg>
<span class="t" style="top:369.4px;font-size:11.5px;line-height:16px;color:#c9c9c9;-webkit-text-stroke:0.25px #c9c9c9;letter-spacing:-0.122px;left:583.8px;"><b style="color:#f0f0f0">Keep in mind:</b> In order to upload a valid file, please consult the <b style="color:#e8e8e8;text-decoration:underline">documentation</b> to help</span>
<span class="t" style="top:389px;font-size:11.5px;line-height:16px;color:#c9c9c9;-webkit-text-stroke:0.25px #c9c9c9;letter-spacing:-0.041px;left:583.8px;">you build a valid structure, or use the template available below.</span>
<span class="t" style="top:434.8px;font-size:11.5px;line-height:16px;color:#c4c4c4;-webkit-text-stroke:0.25px #c4c4c4;letter-spacing:-0.058px;left:557.2px;">For the best results, please build your file using this template.</span>
<div style="left:875px;top:430px;width:151px;height:26.8px;border:1.6px solid #e6e6e6;border-radius:4px;box-sizing:border-box;"></div>
<svg style="left:887.75px;top:436.05px" width="14.5" height="14.5" viewBox="0 0 24 24" fill="#f0f0f0" stroke="#f0f0f0" stroke-width=".9"><path d="M12 16l-5-5 1.4-1.45 2.6 2.6V4h2v8.15l2.6-2.6L17 11zM6 20q-.825 0-1.412-.587T4 18v-3h2v3h12v-3h2v3q0 .825-.587 1.413T18 20z"/></svg>
<span class="t" style="top:435.5px;font-size:11.5px;line-height:16px;color:#f2f2f2;font-weight:700;letter-spacing:-0.343px;left:910.7px;">Download Template</span>
<svg style="left:556px;top:486px" width="472" height="159" viewBox="556 486 472 159" fill="none" stroke="#d4d4d4" stroke-width="2.1"><path d="M556.800 487.650H1026.300M556.800 642.150H1026.300" stroke-dasharray="6.330 3.319"/><path d="M557.850 486.600V643.200M1025.250 486.600V643.200" stroke-dasharray="6.330 3.060"/></svg>
<svg style="left:778.300px;top:516.700px" width="26.200" height="33.200" viewBox="0 0 26.200 33.200" fill="#e6e6e6"><path d="M3.600 0h12.900L26.200 9.700V29.600a3.600 3.600 0 0 1-3.600 3.600H3.600a3.600 3.600 0 0 1-3.600-3.600V3.600a3.600 3.600 0 0 1 3.600-3.600z"/><path d="M17 .8v6.900a1.500 1.500 0 0 0 1.500 1.500h6.900z" fill="#202020" opacity=".9"/></svg>
<span class="t" style="top:571.3px;font-size:13px;line-height:18px;color:#dedede;font-weight:700;letter-spacing:-0.190px;left:651.3px;"><span style="text-decoration:underline;color:#f0f0f0">Click to upload</span> or Drag and Drop your file here</span>
<span class="t" style="top:602.5px;font-size:13px;line-height:18px;color:#b9b9b9;-webkit-text-stroke:0.25px #b9b9b9;letter-spacing:0.092px;left:649.6px;">.csv files allowed, with maximum file size of 2MB</span>
<div style="left:556.8px;top:666px;width:469.5px;height:52px;border:1px solid #646464;border-radius:4px;box-sizing:border-box;"></div>
<svg style="left:571.800px;top:683.800px" width="14.700" height="17.200" viewBox="0 0 15 17.500" fill="#f0f0f0"><path d="M1.800 0h7.700L15 5.500v10.200a1.800 1.800 0 0 1-1.800 1.800H1.800A1.800 1.800 0 0 1 0 15.700V1.800A1.800 1.800 0 0 1 1.800 0z"/><path d="M9.500 0v4a1.500 1.500 0 0 0 1.500 1.500h4z" fill="#202020" opacity=".55"/><path d="M4 10.800l2.400 2.400 4.600-4.600" fill="none" stroke="#202020" stroke-width="1.500"/></svg>
<span class="t" style="top:683.8px;font-size:13px;line-height:18px;color:#ececec;font-weight:700;letter-spacing:-0.391px;left:596.4px;">guardrails-sales.csv</span>
<svg style="left:951.8px;top:682.5px" width="19" height="19" viewBox="0 0 24 24" fill="#f2f2f2" stroke="#f2f2f2" stroke-width=".5"><path d="M12 16l-5-5 1.4-1.45 2.6 2.6V4h2v8.15l2.6-2.6L17 11zM6 20q-.825 0-1.412-.587T4 18v-3h2v3h12v-3h2v3q0 .825-.587 1.413T18 20z"/></svg>
<svg style="left:990.7px;top:683px" width="18" height="18" viewBox="0 0 24 24" fill="#f2f2f2"><path d="M7 21q-.825 0-1.412-.587T5 19V6H4V4h5V3h6v1h5v2h-1v13q0 .825-.587 1.413T17 21zM9 17h2V8H9zm4 0h2V8h-2z"/></svg>
<span class="t" style="top:822.1px;font-size:11px;line-height:15px;color:#dadada;-webkit-text-stroke:0.3px #dadada;letter-spacing:-0.186px;left:549.7px;"><b style="color:#f0f0f0">Progress:</b> 1 / 2 Steps</span>
<div style="left:556px;top:848.2px;width:175px;height:2.2px;background:#3e3e3e;"></div>
<div style="left:549.3px;top:842.6px;width:13.4px;height:13.4px;background:#e2e2e2;border:2px solid #159a49;border-radius:50%;box-sizing:border-box;"></div>
<div style="left:724.3px;top:842.6px;width:13.4px;height:13.4px;background:#3c3c3c;border-radius:50%;"></div>
<span class="t" style="top:827.8px;font-size:13.5px;line-height:19px;color:#f2f2f2;font-weight:700;letter-spacing:-0.556px;left:807.85px;">Cancel</span>
<div style="left:877px;top:820.4px;width:85px;height:34.7px;border:1.4px solid #585858;border-radius:4px;box-sizing:border-box;"></div>
<span class="t" style="top:827.8px;font-size:13.5px;line-height:19px;color:#696969;-webkit-text-stroke:0.55px #696969;letter-spacing:-0.076px;left:893.5px;">Previous</span>
<div style="left:972.8px;top:820.4px;width:61px;height:34.7px;background:#0557c9;border-radius:4px;"></div>
<span class="t" style="top:827.8px;font-size:13.5px;line-height:19px;color:#ffffff;font-weight:700;letter-spacing:-0.422px;left:989.3px;">Next</span>
</div>
</body></html>
